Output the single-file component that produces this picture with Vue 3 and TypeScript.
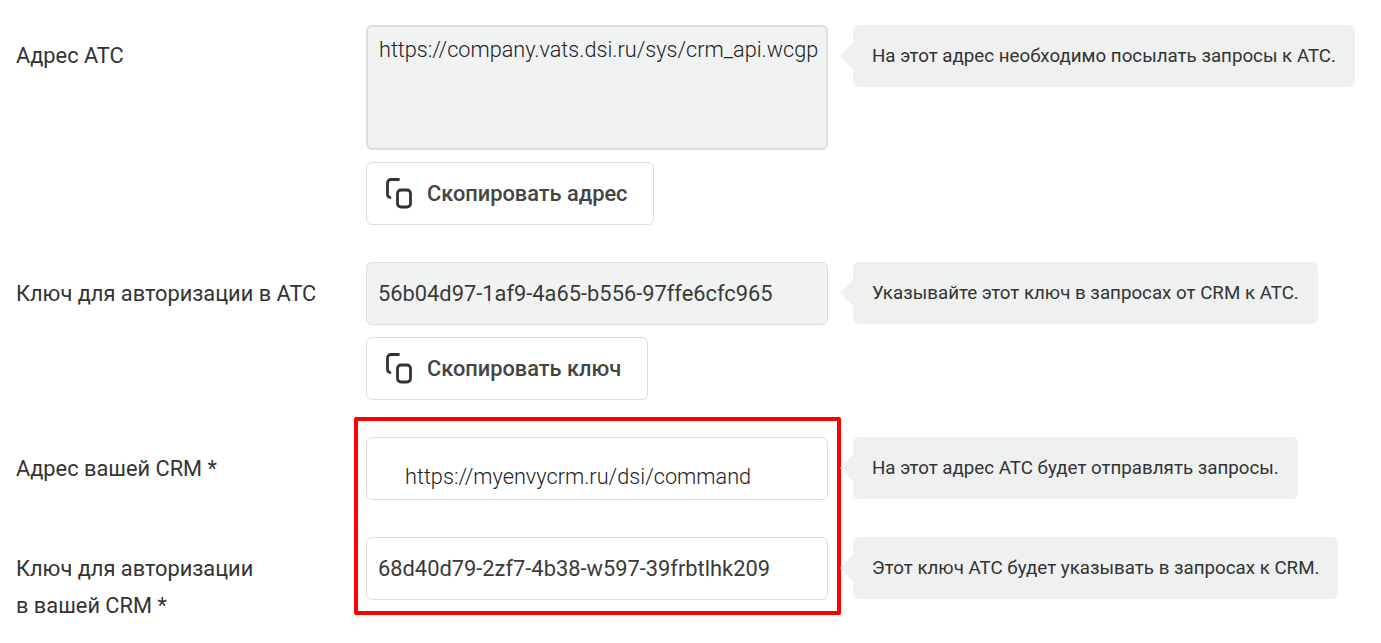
<script setup lang="ts">
interface Row {
  label: string[];
  value: string;
  hint: string;
  kind: 'area' | 'locked' | 'url' | 'key';
  button?: string;
}

const rows: Row[] = [
  {
    label: ['Адрес АТС'],
    value: 'https://company.vats.dsi.ru/sys/crm_api.wcgp',
    hint: 'На этот адрес необходимо посылать запросы к АТС.',
    kind: 'area',
    button: 'Скопировать адрес'
  },
  {
    label: ['Ключ для авторизации в АТС'],
    value: '56b04d97-1af9-4a65-b556-97ffe6cfc965',
    hint: 'Указывайте этот ключ в запросах от CRM к АТС.',
    kind: 'locked',
    button: 'Скопировать ключ'
  },
  {
    label: ['Адрес вашей CRM *'],
    value: 'https://myenvycrm.ru/dsi/command',
    hint: 'На этот адрес АТС будет отправлять запросы.',
    kind: 'url'
  },
  {
    label: ['Ключ для авторизации', 'в вашей CRM *'],
    value: '68d40d79-2zf7-4b38-w597-39frbtlhk209',
    hint: 'Этот ключ АТС будет указывать в запросах к CRM.',
    kind: 'key'
  }
];
</script>

<template>
  <div class="settings">
    <div class="highlight"></div>
    <div v-for="row in rows" :key="row.value" class="row">
      <div class="label">
        <div v-for="line in row.label" :key="line">{{ line }}</div>
      </div>
      <div class="control">
        <div class="field" :data-kind="row.kind">{{ row.value }}</div>
        <button v-if="row.button" class="copy" type="button">
          <svg class="copy-icon" width="28" height="32" viewBox="0 0 28 32" fill="none" stroke="#333" stroke-width="2.8" stroke-linecap="round" stroke-linejoin="round">
            <path d="M13.5 1.5H6A3.5 3.5 0 0 0 2.5 5V16.5A3.5 3.5 0 0 0 5 19.5" />
            <rect x="12.5" y="12" width="13" height="17" rx="3.5" />
          </svg>
          {{ row.button }}
        </button>
      </div>
      <div class="hint">{{ row.hint }}</div>
    </div>
  </div>
</template>

<style>
html,
body {
  background: #fff;
}
</style>

<style scoped>
.settings {
  position: relative;
  box-sizing: border-box;
  width: 1381px;
  height: 643px;
  padding: 25px 0 0 16px;
  overflow: hidden;
  font-family: Roboto, "Liberation Sans", sans-serif;
  color: #333;
}

.highlight {
  position: absolute;
  left: 354px;
  top: 417px;
  width: 487px;
  height: 198px;
  box-sizing: border-box;
  border: 4px solid #fe0000;
  border-radius: 2px;
  pointer-events: none;
}

.row {
  display: flex;
  align-items: flex-start;
  margin-bottom: 37px;
}

.label {
  flex: 0 0 350px;
  padding-top: 13px;
  font-size: 21.8px;
  line-height: 37px;
}

.highlight + .row .label {
  padding-top: 12px;
}

.control {
  display: flex;
  flex: 0 0 462px;
  flex-direction: column;
  align-items: flex-start;
  gap: 12px;
}

.field {
  box-sizing: border-box;
  width: 462px;
  height: 63px;
  padding: 0 11px;
  border: 1px solid #dcdddd;
  border-radius: 6px;
  font-size: 21.85px;
  line-height: 61px;
  white-space: nowrap;
  color: #3a3a3a;
}

.field[data-kind='area'],
.field[data-kind='locked'] {
  background: #f1f3f2;
}

.field[data-kind='area'] {
  height: 125px;
  padding-top: 6px;
  border-width: 2px;
  padding-left: 11px;
  font-size: 21.65px;
  font-weight: 300;
  line-height: 34px;
  color: #222;
}

.field[data-kind='url'] {
  padding: 8px 0 0 38px;
  font-size: 21.7px;
  font-weight: 300;
  color: #222;
}

.copy {
  display: flex;
  align-items: center;
  gap: 14px;
  height: 63px;
  padding: 0 26px 0 18px;
  border: 1px solid #dcdddd;
  border-radius: 6px;
  background: #fff;
  font-family: inherit;
  font-size: 21.8px;
  font-weight: 500;
  color: #444;
}

.copy-icon {
  flex: none;
}

.hint {
  position: relative;
  box-sizing: border-box;
  height: 62px;
  margin-left: 25px;
  padding: 0 19px;
  border-radius: 6px;
  background: #eff0f0;
  font-size: 18.74px;
  line-height: 62px;
  white-space: nowrap;
  color: #333;
}

.hint::before {
  content: "";
  position: absolute;
  left: -13px;
  top: 18px;
  border-top: 13px solid transparent;
  border-bottom: 13px solid transparent;
  border-right: 13px solid #eff0f0;
}
</style>
